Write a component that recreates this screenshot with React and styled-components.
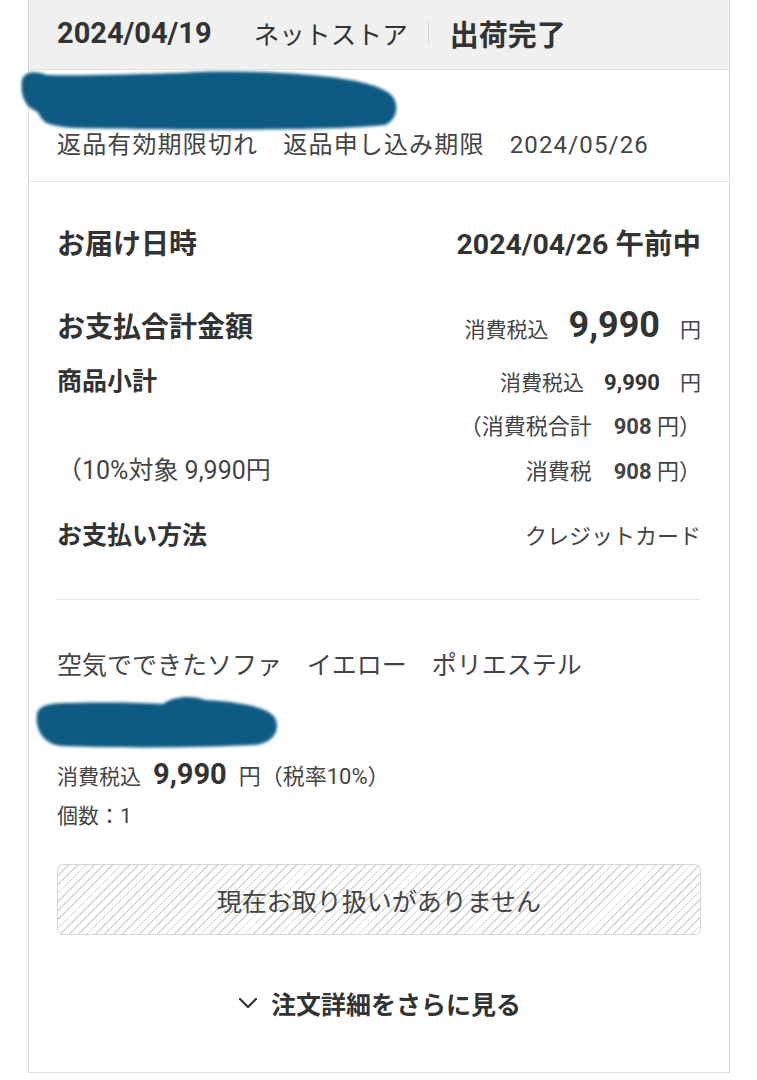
import styled, { createGlobalStyle } from "styled-components";

// ページ全体の基本スタイル
const GlobalStyle = createGlobalStyle`
  html, body {
    margin: 0;
    padding: 0;
    background: #ffffff;
  }
  body {
    font-family: Roboto, "Noto Sans CJK JP", "Noto Sans", sans-serif;
    color: #333333;
  }
`;

// 塗りつぶし（個人情報を隠したマーカー）
const Blot = ({ width, height, d }) => (
  <svg width={width} height={height} viewBox={`0 0 ${width} ${height}`}>
    <defs>
      <filter id="soft" x="-10%" y="-30%" width="120%" height="160%">
        <feGaussianBlur stdDeviation="1.6" />
      </filter>
    </defs>
    <path d={d} fill="#0e5a82" filter="url(#soft)" />
  </svg>
);

const Chevron = () => (
  <svg width="22" height="14" viewBox="0 0 22 14">
    <polyline
      points="3,3 11,11 19,3"
      fill="none"
      stroke="#333"
      strokeWidth="2.2"
      strokeLinecap="round"
      strokeLinejoin="round"
    />
  </svg>
);

export default function App() {
  return (
    <>
      <GlobalStyle />
      <Page>
        <Card>
          <Header>
            <HeaderDate>2024/04/19</HeaderDate>
            <HeaderStore>ネットストア</HeaderStore>
            <HeaderDivider />
            <HeaderStatus>出荷完了</HeaderStatus>
          </Header>

          <ReturnBlock>
            <BlotRow $shift={-37} $top={0} $height={57}>
              <Blot
                width={380}
                height={62}
                d="M2 10 C 4 2, 16 0, 26 5 C 60 6, 120 4, 160 3 C 210 0, 260 2, 300 6 C 340 10, 360 16, 370 24 C 380 32, 378 50, 365 55 C 320 60, 200 60, 120 59 C 70 58, 40 60, 25 52 C 18 46, 20 42, 14 40 C 4 36, 0 22, 2 10 Z"
              />
            </BlotRow>
            <ReturnText>
              返品有効期限切れ　返品申し込み期限　2024/05/26
            </ReturnText>
          </ReturnBlock>

          <Body>
            <InfoRow $top={43}>
              <Label>お届け日時</Label>
              <StrongValue>2024/04/26 午前中</StrongValue>
            </InfoRow>

            <InfoRow $top={40}>
              <Label>お支払合計金額</Label>
              <Price>
                <Small>消費税込</Small>
                <Big>9,990</Big>
                <Small>円</Small>
              </Price>
            </InfoRow>

            <InfoRow $top={17}>
              <SubLabel>商品小計</SubLabel>
              <Price>
                <Small>消費税込</Small>
                <Mid>9,990</Mid>
                <Small>円</Small>
              </Price>
            </InfoRow>

            <InfoRow $top={5}>
              <span />
              <TaxText>
                （消費税合計　<Mid>908</Mid> 円）
              </TaxText>
            </InfoRow>

            <InfoRow $top={4}>
              <TargetText>（10%対象 9,990円</TargetText>
              <TaxText>
                消費税　<Mid>908</Mid> 円）
              </TaxText>
            </InfoRow>

            <InfoRow $top={25}>
              <SubLabel>お支払い方法</SubLabel>
              <PlainValue>クレジットカード</PlainValue>
            </InfoRow>

            <Rule />

            <ProductName>空気でできたソファ　イエロー　ポリエステル</ProductName>
            <BlotRow $shift={-24} $top={8} $height={56}>
              <Blot
                width={248}
                height={56}
                d="M4 20 C 6 10, 20 9, 40 9 C 80 8, 110 9, 130 10 C 140 2, 160 1, 172 6 C 210 8, 236 14, 242 24 C 248 36, 240 50, 220 51 C 160 54, 80 54, 30 52 C 8 51, 2 32, 4 20 Z"
              />
            </BlotRow>
            <ItemPrice>
              <Small>消費税込</Small>
              <ItemAmount>9,990</ItemAmount>
              <ItemNote>円（税率10%）</ItemNote>
            </ItemPrice>
            <Quantity>個数：1</Quantity>

            <UnavailableButton>現在お取り扱いがありません</UnavailableButton>

            <MoreLink>
              <Chevron />
              注文詳細をさらに見る
            </MoreLink>
          </Body>
        </Card>
      </Page>
    </>
  );
}

// --- スタイル ---

const Page = styled.div`
  padding: 0 27px 8px 28px;
`;

const Card = styled.div`
  border-left: 1px solid #dcdcdc;
  border-right: 1px solid #dcdcdc;
  border-bottom: 1px solid #dcdcdc;
  background: #fff;
`;

const Header = styled.div`
  display: flex;
  align-items: center;
  height: 70px;
  padding: 0 28px 4px;
  background: #f0f0f0;
  border-bottom: 1px solid #e2e2e2;
  box-sizing: border-box;
`;

const HeaderDate = styled.span`
  font-weight: 700;
  font-size: 29px;
  margin-right: 42px;
`;

const HeaderStore = styled.span`
  font-size: 25.5px;
  letter-spacing: 0.2px;
`;

const HeaderDivider = styled.span`
  width: 1px;
  height: 22px;
  background: #d4d4d4;
  margin: 0 21px 0 20px;
`;

const HeaderStatus = styled.span`
  font-weight: 700;
  font-size: 29px;
`;

const ReturnBlock = styled.div`
  padding: 0 28px 18px;
  border-bottom: 1px solid #e8e8e8;
`;

const BlotRow = styled.div`
  height: ${(p) => p.$height}px;
  margin-top: ${(p) => p.$top}px;
  margin-left: ${(p) => p.$shift}px;
  line-height: 0;
`;

const ReturnText = styled.div`
  font-size: 24px;
  line-height: 36px;
  color: #444;
  letter-spacing: 1.15px;
`;

const Body = styled.div`
  padding: 0 28px 49px;
  display: flex;
  flex-direction: column;
`;

const InfoRow = styled.div`
  display: flex;
  justify-content: space-between;
  align-items: baseline;
  height: 40px;
  line-height: 40px;
  margin-top: ${(p) => p.$top}px;
`;

const Label = styled.span`
  font-size: 28px;
  font-weight: 700;
`;

const SubLabel = styled.span`
  font-size: 25px;
  font-weight: 700;
`;

const StrongValue = styled.span`
  font-size: 28.5px;
  font-weight: 700;
`;

const Price = styled.span`
  display: flex;
  align-items: baseline;
  gap: 20px;
`;

const Small = styled.span`
  font-size: 21px;
  color: #444;
`;

const Big = styled.span`
  font-size: 36px;
  font-weight: 700;
`;

const Mid = styled.span`
  font-size: 22px;
  font-weight: 700;
`;

const TaxText = styled.span`
  font-size: 22px;
  color: #444;
`;

const TargetText = styled.span`
  font-size: 25px;
  color: #444;
`;

const PlainValue = styled.span`
  font-size: 22px;
  color: #444;
`;

const Rule = styled.div`
  height: 1px;
  background: #e6e6e6;
  margin-top: 43px;
`;

const ProductName = styled.div`
  margin-top: 46px;
  height: 40px;
  line-height: 40px;
  font-size: 25px;
  color: #444;
`;

const ItemPrice = styled.div`
  display: flex;
  align-items: baseline;
  gap: 12px;
  height: 36px;
  line-height: 36px;
  margin-top: 6px;
`;

const ItemAmount = styled.span`
  font-size: 29px;
  font-weight: 700;
`;

const ItemNote = styled.span`
  font-size: 22px;
  color: #444;
`;

const Quantity = styled.div`
  margin-top: 6px;
  height: 36px;
  line-height: 36px;
  font-size: 21px;
  color: #444;
`;

const UnavailableButton = styled.div`
  margin-top: 30px;
  height: 71px;
  display: flex;
  align-items: center;
  justify-content: center;
  border: 1px solid #d6d6d6;
  border-radius: 6px;
  box-sizing: border-box;
  font-size: 25px;
  color: #444;
  background: repeating-linear-gradient(
    -45deg,
    #ffffff 0px,
    #ffffff 5px,
    #d4d4d4 5px,
    #d4d4d4 6.2px
  );
`;

const MoreLink = styled.div`
  margin-top: 48px;
  height: 40px;
  display: flex;
  align-items: center;
  justify-content: center;
  gap: 12px;
  font-size: 25px;
  font-weight: 700;
`;
